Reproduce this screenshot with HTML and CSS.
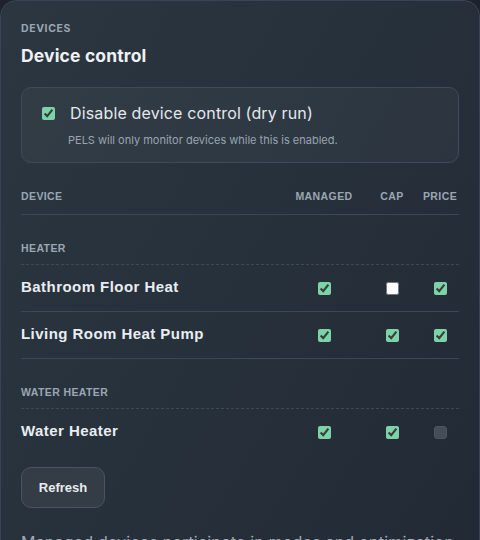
FILE: index.html
```html
<!DOCTYPE html>
<html lang="en">
<head>
<meta charset="utf-8">
<title>Device control</title>
<link rel="stylesheet" href="styles.css">
</head>
<body>
<section class="card">
  <div class="eyebrow">DEVICES</div>
  <h2 class="title">Device control</h2>

  <div class="dry-box">
    <label class="dry-row">
      <input type="checkbox" class="cb" checked>
      <span class="dry-label">Disable device control (dry run)</span>
    </label>
    <p class="dry-hint">PELS will only monitor devices while this is enabled.</p>
  </div>

  <div class="table">
    <div class="row head">
      <div class="c-name">DEVICE</div>
      <div class="c-col">MANAGED</div>
      <div class="c-col">CAP</div>
      <div class="c-col">PRICE</div>
    </div>

    <div class="group">HEATER</div>
    <div class="row item">
      <div class="c-name name">Bathroom Floor Heat</div>
      <div class="c-col"><input type="checkbox" class="cb" checked></div>
      <div class="c-col"><input type="checkbox" class="cb"></div>
      <div class="c-col"><input type="checkbox" class="cb" checked></div>
    </div>
    <div class="row item">
      <div class="c-name name">Living Room Heat Pump</div>
      <div class="c-col"><input type="checkbox" class="cb" checked></div>
      <div class="c-col"><input type="checkbox" class="cb" checked></div>
      <div class="c-col"><input type="checkbox" class="cb" checked></div>
    </div>

    <div class="group">WATER HEATER</div>
    <div class="row item last">
      <div class="c-name name">Water Heater</div>
      <div class="c-col"><input type="checkbox" class="cb" checked></div>
      <div class="c-col"><input type="checkbox" class="cb" checked></div>
      <div class="c-col"><input type="checkbox" class="cb cb-off" disabled></div>
    </div>
  </div>

  <button class="btn" type="button">Refresh</button>

  <p class="footnote">Managed devices participate in modes and optimization</p>
</section>
</body>
</html>
```

FILE: styles.css
```css
* { box-sizing: border-box; }

html, body {
  margin: 0;
  height: 100%;
}

body {
  background: #1c232b;
  font-family: Inter, "Noto Sans", sans-serif;
  color: #e6ebf1;
  overflow: hidden;
}

.card {
  width: 480px;
  min-height: 600px;
  border: 1px solid #3a4450;
  border-radius: 16px;
  background: linear-gradient(120deg, #2c3640 0%, #27313c 45%, #212934 100%);
  padding: 21px 20px 20px 20px;
}

.eyebrow {
  font-family: Inter, sans-serif;
  font-size: 10.5px;
  line-height: 14px;
  font-weight: 700;
  letter-spacing: 0.6px;
  color: #9ba6b3;
}

.title {
  margin: 9px 0 0;
  font-size: 17.5px;
  line-height: 22px;
  font-weight: 700;
  color: #eef1f5;
  letter-spacing: 0.15px;
}

.dry-box {
  margin-top: 20px;
  border: 1px solid #414b57;
  border-radius: 10px;
  background: rgba(255, 255, 255, 0.035);
  padding: 14px 20px 14px 20px;
}

.dry-row {
  display: flex;
  align-items: center;
  gap: 15px;
  height: 22px;
}

.dry-label {
  font-size: 16px;
  line-height: 22px;
  letter-spacing: 0.15px;
  color: #e3e8ee;
}

.dry-hint {
  margin: 8px 0 0 26px;
  font-size: 11px;
  line-height: 16px;
  letter-spacing: 0;
  color: #9aa4b0;
}

.cb {
  width: 13px;
  height: 13px;
  margin: 0;
  accent-color: #7dd3a8;
}

.cb-off {
  appearance: none;
  -webkit-appearance: none;
  background: #454d57;
  border-radius: 3px;
  border: 1px solid #4c5560;
}

.table {
  margin-top: 26px;
  font-family: "Liberation Sans", Arial, sans-serif;
}

.row {
  display: grid;
  grid-template-columns: 1fr 76px 60px 36px;
  padding-right: 1px;
  align-items: center;
}

.c-col {
  display: flex;
  justify-content: center;
}

.head {
  padding-bottom: 11px;
  border-bottom: 1px solid #3d4753;
  font-size: 10.5px;
  line-height: 14px;
  font-weight: 700;
  letter-spacing: 0.4px;
  color: #9ba6b3;
}

.group {
  padding: 26px 0 9px;
  border-bottom: 1px dashed #3f4955;
  font-size: 10.5px;
  line-height: 14px;
  font-weight: 700;
  letter-spacing: 0.4px;
  color: #9ba6b3;
}

.item {
  height: 47px;
  border-bottom: 1px solid #3d4753;
}

.item.last {
  border-bottom: none;
  height: 46px;
}

.name {
  font-size: 15px;
  font-weight: 700;
  color: #e9edf2;
  margin-top: -4px;
  letter-spacing: 0.45px;
}

.btn {
  margin-top: 12px;
  width: 84px;
  height: 41px;
  border: 1px solid #4a535e;
  border-radius: 10px;
  background: #343c46;
  color: #e8ecf1;
  font-family: "Liberation Sans", Arial, sans-serif;
  font-size: 13px;
  font-weight: 700;
  cursor: pointer;
}

.footnote {
  margin: 23px 0 0;
  font-size: 16px;
  line-height: 22px;
  letter-spacing: 0.2px;
  color: #a0a9b4;
}
```
